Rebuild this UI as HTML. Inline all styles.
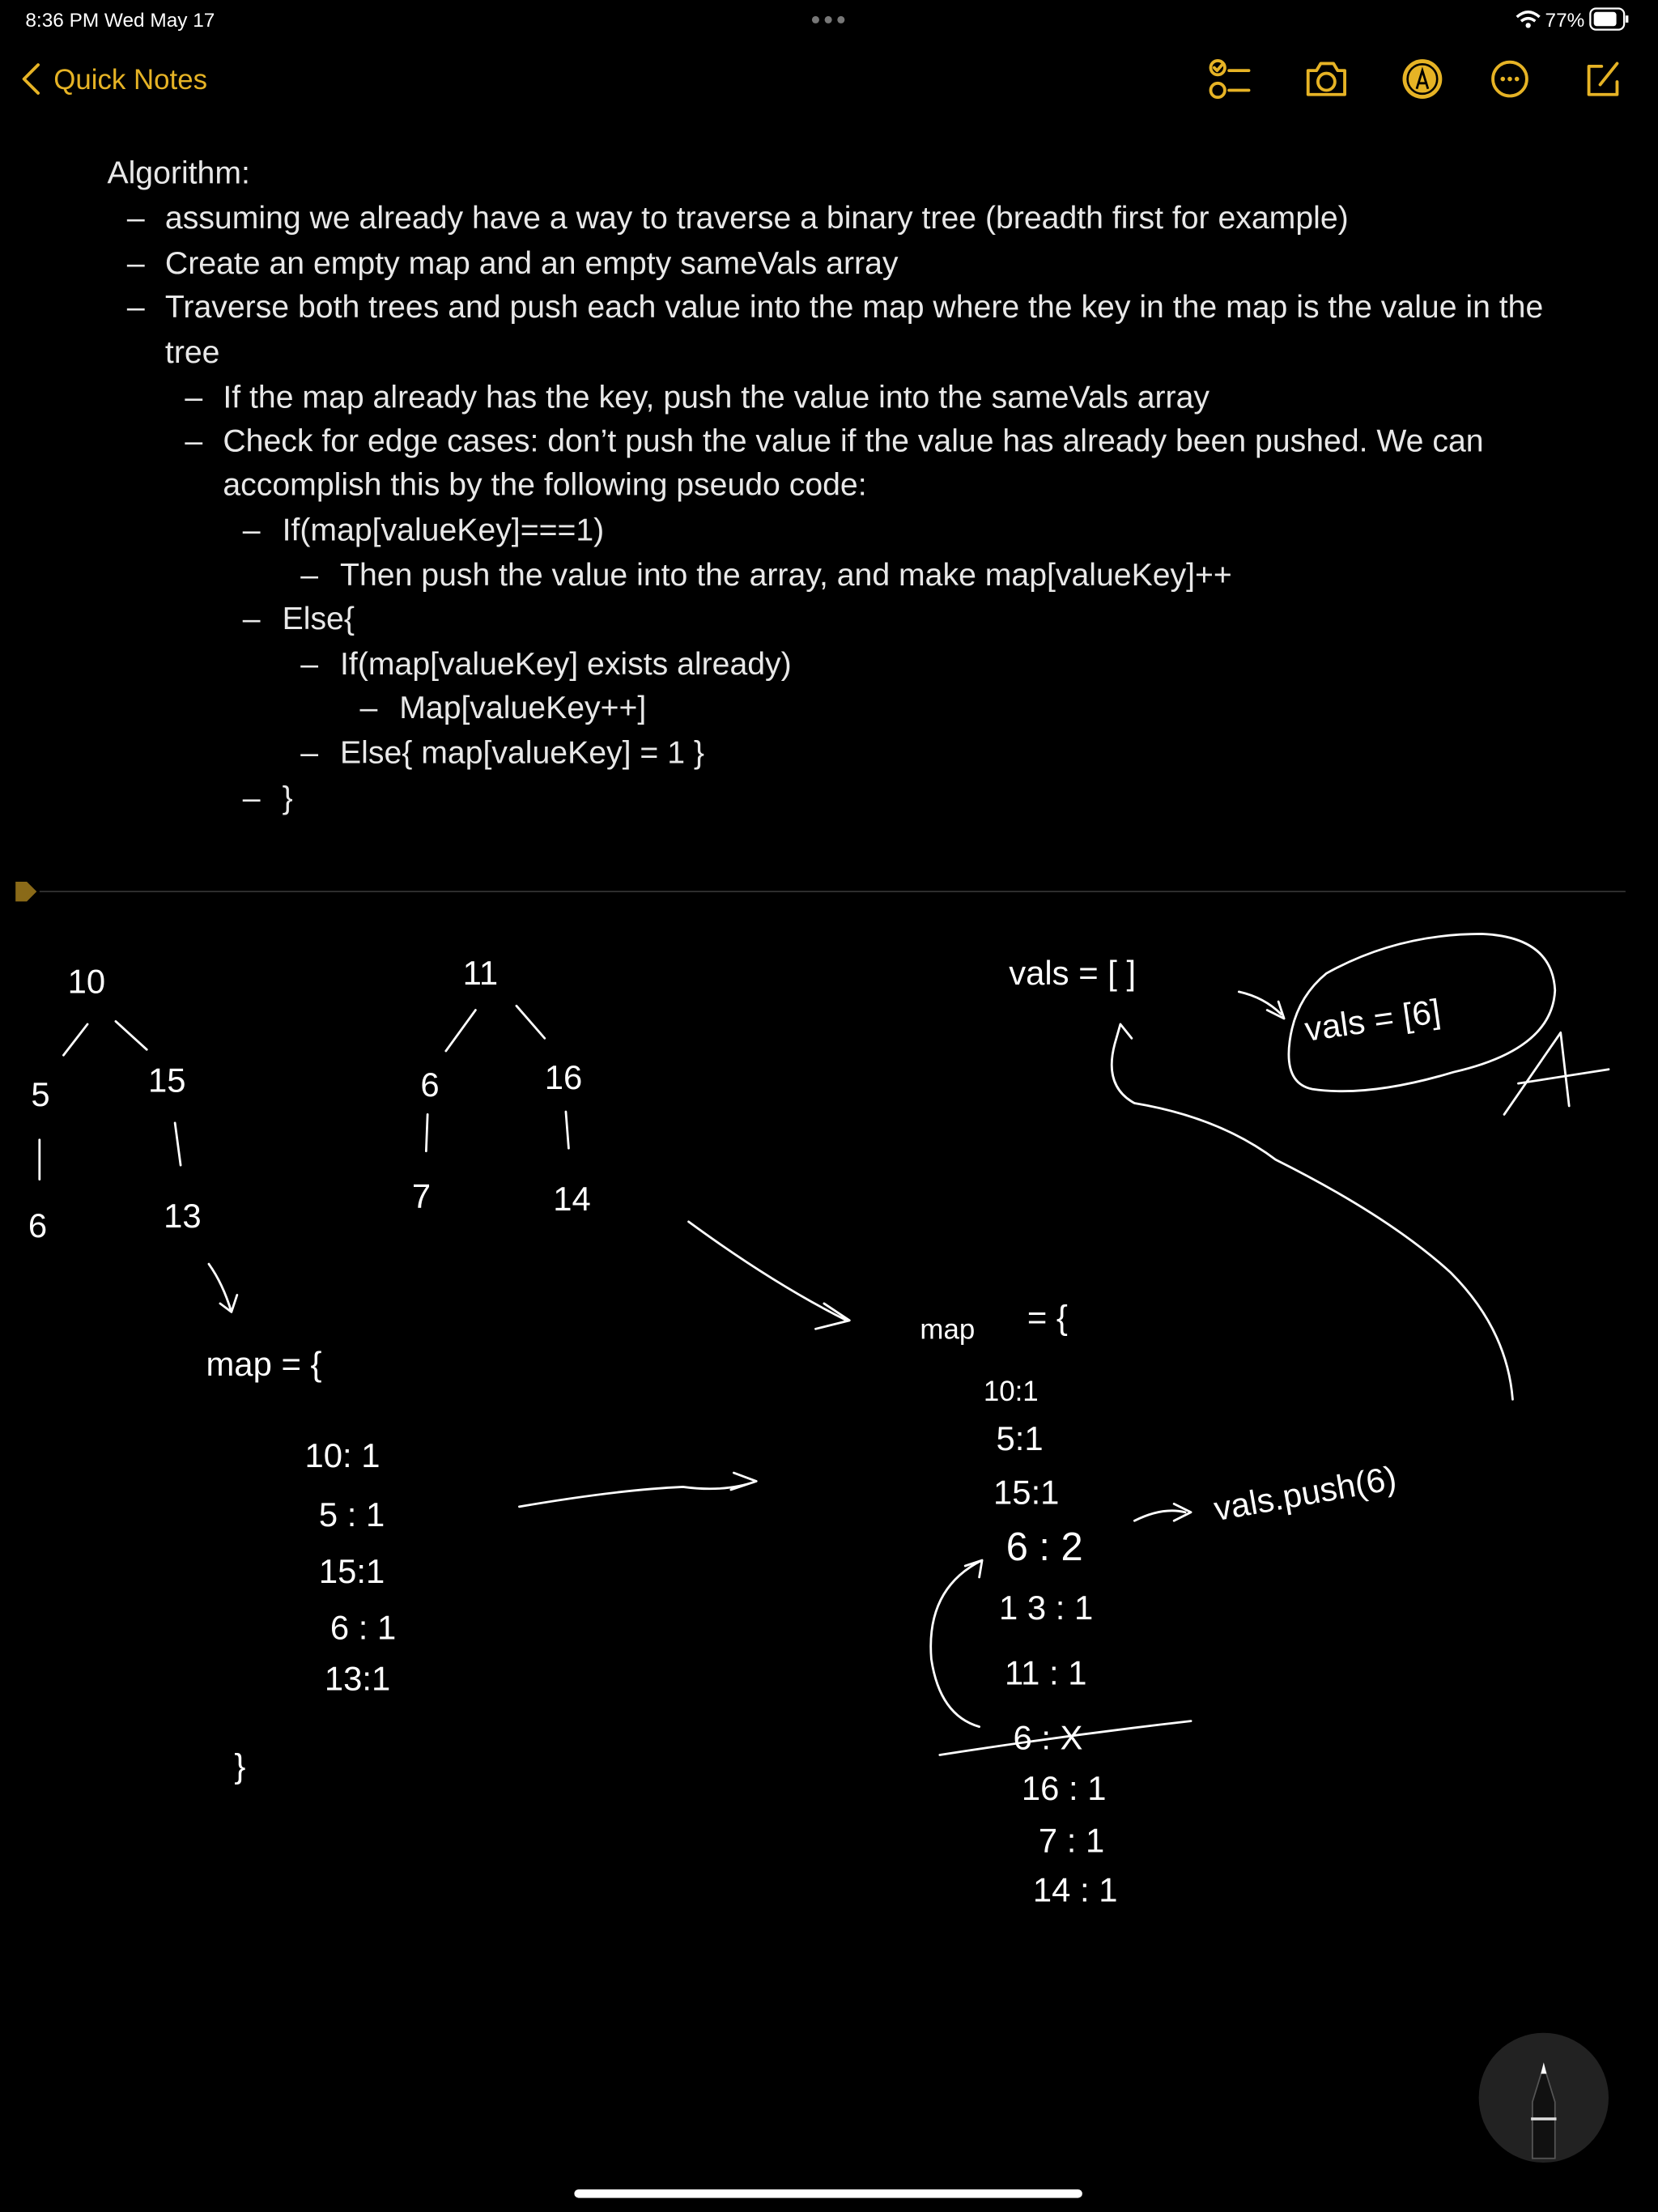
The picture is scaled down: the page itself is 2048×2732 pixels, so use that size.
<!DOCTYPE html>
<html><head><meta charset="utf-8"><style>
html,body{margin:0;padding:0;background:#000;width:2048px;height:2732px;overflow:hidden}
svg{display:block}
.t{font-family:"Liberation Sans",sans-serif;fill:#e8e8e8;font-size:22.5px}
.h{font-family:"Liberation Sans",sans-serif;fill:#fff;font-size:24px;font-weight:300}
.s{fill:none;stroke:#fff;stroke-width:1.6;stroke-linecap:round;stroke-linejoin:round}
.y{fill:none;stroke:#e6b325;stroke-width:2.2;stroke-linecap:round;stroke-linejoin:round}
</style></head><body>
<svg width="2048" height="2732" viewBox="0 0 1175 1568" preserveAspectRatio="none">
<text x="18" y="19" style="font-family:'Liberation Sans',sans-serif;fill:#fff;font-size:14px">8:36 PM   Wed May 17</text>
<circle cx="578" cy="14" r="2.6" fill="#777"/><circle cx="587" cy="14" r="2.6" fill="#777"/><circle cx="596" cy="14" r="2.6" fill="#777"/>
<path d="M1075 12 q8 -7 16 0 M1078 15 q5 -4 10 0" stroke="#fff" stroke-width="2" fill="none"/><circle cx="1083" cy="18" r="1.8" fill="#fff"/>
<text x="1095" y="19" style="font-family:'Liberation Sans',sans-serif;fill:#fff;font-size:14px">77%</text>
<rect x="1127" y="6" width="24" height="15" rx="4" fill="none" stroke="#fff" stroke-width="1.3"/>
<rect x="1129.5" y="8.5" width="16" height="10" rx="2" fill="#fff"/>
<rect x="1152" y="11" width="2" height="5" fill="#fff"/>
<path d="M27 46 l-10 10 l10 10" class="y" stroke-width="2.6"/>
<text x="38" y="63" style="font-family:'Liberation Sans',sans-serif;fill:#e6b325;font-size:20px">Quick Notes</text>
<circle cx="863" cy="48" r="5" class="y"/><path d="M860.5 48 l2 2 l3.5 -4" class="y" stroke-width="1.5"/>
<circle cx="863" cy="64" r="5" class="y"/><path d="M871 50 h14 M871 64 h14" class="y"/>
<path d="M927 50 h6 l3 -5 h9 l3 5 h5 v17 h-26 z" class="y"/><circle cx="940" cy="58" r="6" class="y"/>
<circle cx="1008" cy="56" r="14" fill="#e6b325"/><circle cx="1008" cy="56" r="10.5" fill="none" stroke="#000" stroke-width="1.5"/><path d="M1004 63 l4 -13 l4 13 M1005.5 59 h5" stroke="#000" stroke-width="1.6" fill="none"/>
<circle cx="1070" cy="56" r="12" class="y"/><circle cx="1065" cy="56" r="1.6" fill="#e6b325"/><circle cx="1070" cy="56" r="1.6" fill="#e6b325"/><circle cx="1075" cy="56" r="1.6" fill="#e6b325"/>
<path d="M1135 47 h-9 v20 h20 v-9" class="y"/><path d="M1134 60 l12 -15" class="y"/>
<g class="t">
<text x="76" y="130">Algorithm:</text>
<text x="90" y="162">–</text><text x="117" y="162">assuming we already have a way to traverse a binary tree (breadth first for example)</text>
<text x="90" y="194">–</text><text x="117" y="194">Create an empty map and an empty sameVals array</text>
<text x="90" y="225">–</text><text x="117" y="225">Traverse both trees and push each value into the map where the key in the map is the value in the</text>
<text x="117" y="257">tree</text>
<text x="131" y="289">–</text><text x="158" y="289">If the map already has the key, push the value into the sameVals array</text>
<text x="131" y="320">–</text><text x="158" y="320">Check for edge cases: don’t push the value if the value has already been pushed. We can</text>
<text x="158" y="351">accomplish this by the following pseudo code:</text>
<text x="172" y="383">–</text><text x="200" y="383">If(map[valueKey]===1)</text>
<text x="213" y="415">–</text><text x="241" y="415">Then push the value into the array, and make map[valueKey]++</text>
<text x="172" y="446">–</text><text x="200" y="446">Else{</text>
<text x="213" y="478">–</text><text x="241" y="478">If(map[valueKey] exists already)</text>
<text x="255" y="509">–</text><text x="283" y="509">Map[valueKey++]</text>
<text x="213" y="541">–</text><text x="241" y="541">Else{ map[valueKey] = 1 }</text>
<text x="172" y="573">–</text><text x="200" y="573">}</text>
</g>
<line x1="28" y1="632" x2="1152" y2="632" stroke="#333" stroke-width="1"/>
<path d="M11 625 h8 l7 7 l-7 7 h-8 z" fill="#8a6a18"/>
<g class="h">
<text x="48" y="704">10</text>
<text x="22" y="784">5</text><text x="105" y="774">15</text>
<text x="20" y="877">6</text><text x="116" y="870">13</text>
<text x="328" y="698">11</text>
<text x="298" y="777">6</text><text x="386" y="772">16</text>
<text x="292" y="856">7</text><text x="392" y="858">14</text>
<text x="146" y="975">map = {</text>
<text x="216" y="1040">10: 1</text><text x="226" y="1082">5 : 1</text><text x="226" y="1122">15:1</text><text x="234" y="1162">6 : 1</text><text x="230" y="1198">13:1</text>
<text x="166" y="1260">}</text>
<text x="715" y="698">vals = [ ]</text>
<text x="926" y="738" transform="rotate(-8 926 738)">vals = [6]</text>
<text x="652" y="949" style="font-size:20px">map</text><text x="728" y="942">= {</text>
<text x="697" y="993" style="font-size:20px">10:1</text><text x="706" y="1028">5:1</text><text x="704" y="1066">15:1</text>
<text x="713" y="1106" style="font-size:28px">6 : 2</text><text x="708" y="1148">1 3 : 1</text><text x="712" y="1194">11 : 1</text>
<text x="718" y="1240">6 : X</text><text x="724" y="1276">16 : 1</text><text x="736" y="1313">7 : 1</text><text x="732" y="1348">14 : 1</text>
<text x="862" y="1078" transform="rotate(-10 862 1078)">vals.push(6)</text>
</g>
<g class="s">
<path d="M45 748 L62 726 M82 724 L104 744"/>
<path d="M28 808 v28 M124 796 l4 30"/>
<path d="M316 745 L337 716 M366 713 L386 736"/>
<path d="M303 790 l-1 26 M401 788 l2 26"/>
<path d="M148 896 q10 14 16 34 M156 924 l8 6 l4 -12"/>
<path d="M488 866 q60 44 112 70 M584 924 l18 12 l-24 6"/>
<path d="M368 1068 q70 -12 116 -14 q30 4 52 -4 M520 1044 l16 6 l-18 6"/>
<path d="M878 703 q18 4 30 16 M898 716 l12 6 l-4 -12"/>
<path d="M790 740 q-8 30 14 42 q60 10 100 40 q80 40 124 80 q40 40 44 90 M790 740 l4 -14 l8 10"/>
<path d="M940 690 q50 -28 110 -28 q50 2 52 40 q-2 42 -72 58 q-60 18 -100 12 q-20 -4 -16 -34 q4 -30 26 -48"/>
<path d="M1066 790 l40 -58 l6 52 M1076 768 l64 -10"/>
<path d="M804 1078 q20 -10 36 -6 M832 1066 l12 6 l-12 6"/>
<path d="M696 1106 q-40 20 -36 70 q6 40 34 48 M684 1110 l12 -4 l-2 12"/>
<path d="M666 1244 q90 -14 178 -24"/>
</g>
<circle cx="1094" cy="1487" r="46" fill="#222"/>
<path d="M1086 1530 v-40 l8 -26 l8 26 v40 z" fill="#111" stroke="#555" stroke-width="1"/>
<path d="M1092 1470 l2 -8 l2 8 z" fill="#fff"/>
<line x1="1085" y1="1502" x2="1103" y2="1502" stroke="#ddd" stroke-width="2"/>
<rect x="407" y="1552" width="360" height="6" rx="3" fill="#fff"/>
</svg>
</body></html>
